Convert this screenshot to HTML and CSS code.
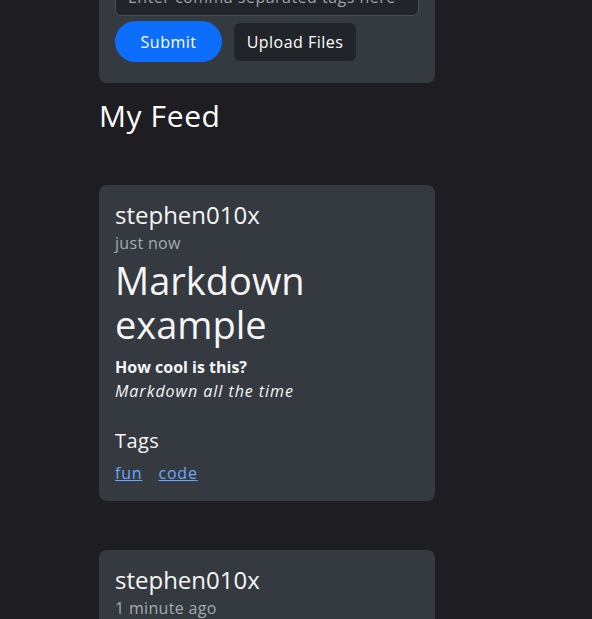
FILE: index.html
```html
<!DOCTYPE html>
<html>
<head>
<meta charset="utf-8">
<link rel="stylesheet" href="styles.css">
</head>
<body>
<main class="page">
  <section class="card form-card">
    <input class="tags-input" type="text" placeholder="Enter comma separated tags here">
    <div class="actions">
      <button class="btn btn-primary">Submit</button>
      <button class="btn btn-dark">Upload Files</button>
    </div>
  </section>

  <h2 class="feed-title">My Feed</h2>

  <article class="card post">
    <div class="author">stephen010x</div>
    <div class="time">just now</div>
    <h1 class="post-title">Markdown example</h1>
    <div class="post-body">
      <p class="strong-line"><strong>How cool is this?</strong></p>
      <p class="em-line"><em>Markdown all the time</em></p>
    </div>
    <h3 class="tags-title">Tags</h3>
    <div class="tags">
      <a href="#" class="tag">fun</a>
      <a href="#" class="tag">code</a>
    </div>
  </article>

  <article class="card post">
    <div class="author">stephen010x</div>
    <div class="time">1 minute ago</div>
    <h1 class="post-title">Another post</h1>
  </article>
</main>
</body>
</html>
```
FILE: styles.css
```css
html, body {
  margin: 0;
  padding: 0;
  background: #1d1d22;
  height: 100%;
  overflow: hidden;
}
body {
  font-family: "Open Sans", "Liberation Sans", sans-serif;
  color: #f5f5f5;
}
.page {
  width: 336px;
  margin-left: 99px;
  display: flex;
  flex-direction: column;
}
.card {
  background: #343a40;
  border-radius: 8px;
  padding: 16px;
  box-sizing: border-box;
}
.form-card {
  margin-top: -38px;
  padding-bottom: 21px;
}
.tags-input {
  display: block;
  width: 100%;
  box-sizing: border-box;
  height: 38px;
  background: #212529;
  border: 1px solid #495057;
  border-radius: 6px;
  padding: 0 12px;
  font-family: inherit;
  font-size: 16px;
  letter-spacing: 0.03em;
  color: #dee2e6;
}
.tags-input::placeholder { color: #9ea3a8; }
.actions {
  margin-top: 5px;
  display: flex;
  align-items: center;
  gap: 12px;
}
.btn {
  font-family: inherit;
  font-size: 16px;
  letter-spacing: 0.03em;
  color: #fff;
  border: none;
  cursor: pointer;
}
.btn-primary {
  background: #0d6efd;
  width: 107px;
  height: 41px;
  border-radius: 21px;
}
.btn-dark {
  background: #212529;
  width: 122px;
  height: 38px;
  border-radius: 6px;
}
.feed-title {
  margin: 15px 0 0;
  font-size: 30px;
  font-weight: 400;
  line-height: 36px;
  letter-spacing: 0.02em;
  color: #fff;
}
.post {
  margin-top: 49px;
}
.feed-title + .post {
  margin-top: 51px;
}
.author {
  font-size: 24px;
  line-height: 30px;
  margin-top: -1px;
}
.time {
  margin-top: 2px;
  font-size: 16px;
  line-height: 22px;
  letter-spacing: 0.02em;
  color: #a7abaf;
}
.post-title {
  margin: 4px 0 0;
  font-size: 38px;
  font-weight: 400;
  line-height: 44px;
}
.post-body {
  margin-top: 9px;
  font-size: 16px;
  line-height: 24px;
}
.post-body p { margin: 0; }
.strong-line strong { font-weight: 700; }
.em-line em { font-style: italic; letter-spacing: 0.06em; }
.tags-title {
  margin: 25px 0 0;
  font-size: 20px;
  font-weight: 400;
  line-height: 26px;
  letter-spacing: 0.02em;
}
.tags {
  margin-top: 7px;
  display: flex;
  gap: 16px;
  font-size: 16px;
  line-height: 24px;
  letter-spacing: 0.05em;
}
.tag {
  color: #6ea8fe;
  text-decoration: underline;
}
```
